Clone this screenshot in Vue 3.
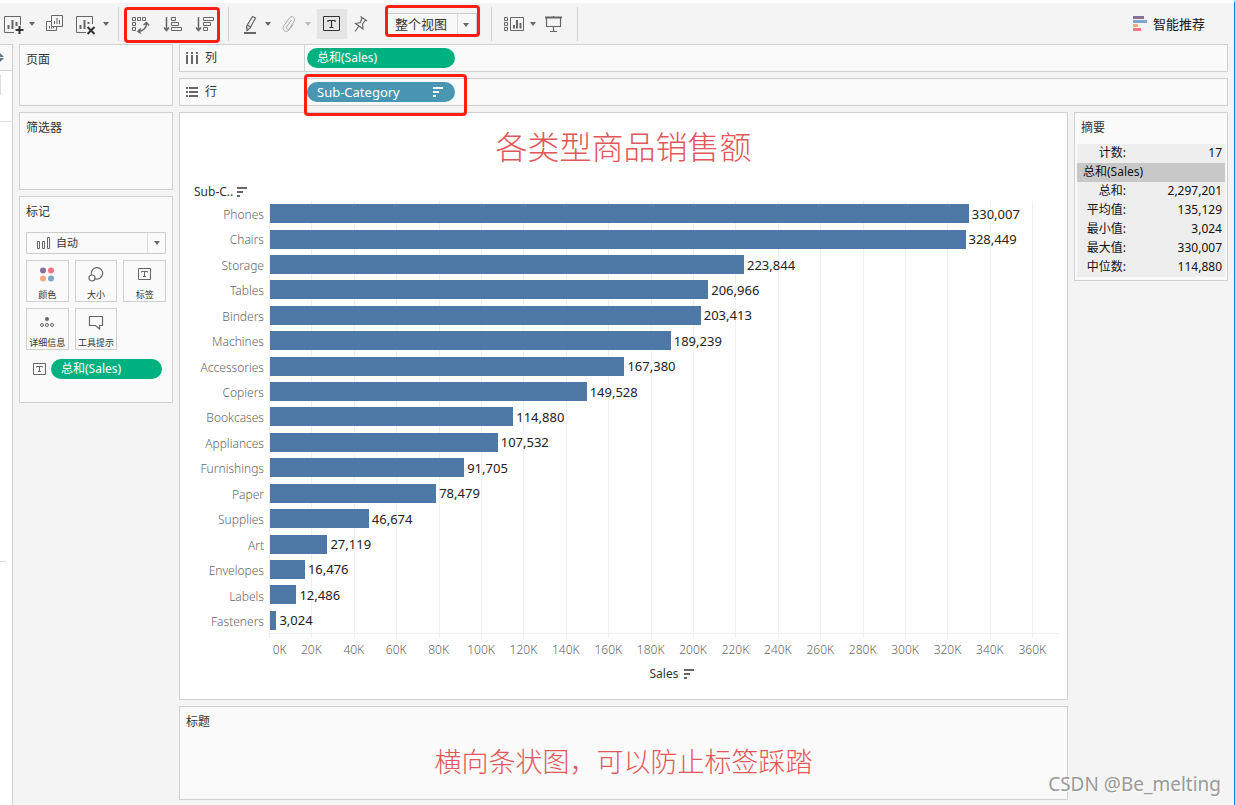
<script setup>
const AXIS_MAX = 372600

const rows = [
  ['Phones', 330007],
  ['Chairs', 328449],
  ['Storage', 223844],
  ['Tables', 206966],
  ['Binders', 203413],
  ['Machines', 189239],
  ['Accessories', 167380],
  ['Copiers', 149528],
  ['Bookcases', 114880],
  ['Appliances', 107532],
  ['Furnishings', 91705],
  ['Paper', 78479],
  ['Supplies', 46674],
  ['Art', 27119],
  ['Envelopes', 16476],
  ['Labels', 12486],
  ['Fasteners', 3024],
].map(([name, value]) => ({
  name,
  label: value.toLocaleString('en-US'),
  width: (value / AXIS_MAX) * 100 + '%',
}))

const ticks = Array.from({ length: 19 }, (_, i) => i * 20 + 'K')

const summary = [
  ['总和:', '2,297,201'],
  ['平均值:', '135,129'],
  ['最小值:', '3,024'],
  ['最大值:', '330,007'],
  ['中位数:', '114,880'],
]
</script>

<template>
  <div class="app">
    <header class="toolbar">
      <div class="group first">
        <span class="split">
          <button class="tool" aria-label="新建工作表">
            <svg width="24" height="24" viewBox="0 0 24 24" fill="none">
              <path d="M13 20.500H3.500V4.500H19.500V13" stroke="#666" />
              <path d="M7.500 17V13M11.500 17V8M15.500 14V10" stroke="#666" stroke-width="2" />
              <path d="M18.500 14V22M14.500 18H22.500" stroke="#333" stroke-width="2" />
            </svg>
          </button>
          <button class="caret" aria-label="新建选项"></button>
        </span>
        <button class="tool" aria-label="复制工作表">
          <svg width="24" height="24" viewBox="0 0 24 24" fill="none" stroke="#666">
            <path d="M8.500 3.500H19.500V14.500H8.500ZM8.500 9.500H3.500V18.500H13.500V14.500" />
            <path d="M11.500 12V9M14 12V6M16.500 12V8M6.500 16.500V14M8.500 16.500V15M10.500 16.500V15" />
          </svg>
        </button>
        <span class="split">
          <button class="tool wide" aria-label="清除工作表">
            <svg width="28" height="24" viewBox="0 0 28 24" fill="none">
              <path d="M15 20.500H5.500V4.500H21.500V12" stroke="#666" />
              <path d="M9.500 17V13M13.500 17V8M17.500 12V10" stroke="#666" stroke-width="2" />
              <path d="M16.500 15L23.500 22M23.500 15L16.500 22" stroke="#333" stroke-width="2" />
            </svg>
          </button>
          <button class="caret" aria-label="清除选项"></button>
        </span>
      </div>

      <div class="group sorts marked">
        <button class="tool" aria-label="交换行和列">
          <svg width="24" height="24" viewBox="0 0 24 24" fill="none" stroke="#666">
            <path d="M3.500 5.500h3v3h-3zM8.500 5.500h3v3h-3zM13.500 5.500h3v3h-3zM3.500 10.500h3v3h-3zM3.500 15.500h3v3h-3z" />
            <path d="M17.500 11.500C17.500 16 14 19 10 19.500M14.500 13L17.500 10.500L20 13.500M12 16.500L9 19.500L12 21.500" stroke-width="1.500" />
          </svg>
        </button>
        <button class="tool" aria-label="升序排序">
          <svg width="24" height="24" viewBox="0 0 24 24" fill="none" stroke="#666">
            <path d="M5.500 5V18M3 15.500L5.500 18.500L8 15.500" stroke-width="1.500" />
            <path d="M10.500 5.500h4v3h-4zM10.500 10.500h7v3h-7zM10.500 15.500h10v3h-10z" />
          </svg>
        </button>
        <button class="tool" aria-label="降序排序">
          <svg width="24" height="24" viewBox="0 0 24 24" fill="none" stroke="#666">
            <path d="M5.500 5V18M3 15.500L5.500 18.500L8 15.500" stroke-width="1.500" />
            <path d="M10.500 5.500h10v3h-10zM10.500 10.500h7v3h-7zM10.500 15.500h4v3h-4z" />
          </svg>
        </button>
      </div>

      <div class="group view-tools">
        <span class="split">
          <button class="tool" aria-label="突出显示">
            <svg width="24" height="24" viewBox="0 0 24 24" fill="none" stroke="#666">
              <path d="M15.500 4.500L18.500 6L13 16L10 18.500L9.500 14.500ZM10.500 13L13.500 15M10 18.500V15" stroke-width="1.200" />
              <path d="M7 21H19" stroke-width="2" />
            </svg>
          </button>
          <button class="caret" aria-label="突出显示选项"></button>
        </span>
        <span class="split">
          <button class="tool" disabled aria-label="组成员">
            <svg width="24" height="24" viewBox="0 0 24 24" fill="none" stroke="#aaa">
              <path d="M14.500 8L9.500 15C8.500 17 11 18.500 12.500 16.500L17 9.500C19 6 15 2.500 12.500 6L7 13.500C4 18 9 21.500 12 18L16 12.500" />
            </svg>
          </button>
          <button class="caret" disabled aria-label="组选项"></button>
        </span>
        <button class="tool active" aria-label="显示标记标签">
          <svg width="24" height="24" viewBox="0 0 24 24" fill="none" stroke="#333">
            <path d="M3.500 4.500H19.500V18.500H3.500Z" />
            <path d="M8 10V8.500H15V10M11.500 8.500V15.500M9.500 15.500H13.500" stroke-width="1.200" />
          </svg>
        </button>
        <button class="tool" aria-label="固定轴">
          <svg width="24" height="24" viewBox="0 0 24 24" fill="none" stroke="#666" stroke-width="1.200">
            <path d="M11.500 4.500L18 9M13 5.500L11.500 10.500L6.500 11.500L14 17L13.500 12L16.500 8M10 14L6 19.500" />
          </svg>
        </button>
        <span class="fit marked">
          <select aria-label="适合方式">
            <option>整个视图</option>
          </select>
        </span>
      </div>

      <div class="group show">
        <span class="split">
          <button class="tool" aria-label="显示隐藏卡">
            <svg width="24" height="24" viewBox="0 0 24 24" fill="none" stroke="#666">
              <path d="M2.500 5.500h3v3h-3zM2.500 10.500h3v3h-3zM2.500 15.500h3v3h-3zM8.500 5.500h13v13h-13z" />
              <path d="M12 16.500V13M15 16.500V8M18.500 16.500V11" stroke-width="2" />
            </svg>
          </button>
          <button class="caret" aria-label="卡选项"></button>
        </span>
        <button class="tool" aria-label="演示模式">
          <svg width="24" height="24" viewBox="0 0 24 24" fill="none" stroke="#666">
            <path d="M3 5.500H20" stroke-width="2" />
            <path d="M4.500 6V14.500H18.500V6M11.500 4V5M11.500 15V19.500M8 19.500H15" stroke-width="1.200" />
          </svg>
        </button>
      </div>

      <button class="show-me">
        <svg width="14" height="15" viewBox="0 0 14 15">
          <path fill="#88719b" d="M0 0h11v3H0z" />
          <path fill="#82a6ca" d="M0 4h14v3H0z" />
          <path fill="#f5a97c" d="M0 8h5v3H0z" />
          <path fill="#fb7384" d="M0 12h8v3H0z" />
        </svg>
        智能推荐
      </button>
    </header>

    <div class="workspace">
      <div class="data-edge">
        <div class="edge-head">
          <svg width="4" height="9" viewBox="0 0 4 9"><path fill="#667382" d="M0 0L4 4H0ZM0 5H4L0 9Z" /></svg>
        </div>
        <div class="edge-search"><i></i></div>
        <div class="edge-fields"></div>
        <div class="edge-params"></div>
      </div>

      <aside class="side">
        <section class="card pages"><h2>页面</h2></section>
        <section class="card filters"><h2>筛选器</h2></section>
        <section class="card marks">
          <h2>标记</h2>
          <div class="mark-type">
            <svg width="14" height="12" viewBox="0 0 14 12" fill="none" stroke="#666">
              <path d="M1.500 4.500h2v7h-2zM6.500 4.500h2v7h-2zM11.500 0.500h2v11h-2z" />
            </svg>
            <select aria-label="标记类型">
              <option>自动</option>
            </select>
          </div>
          <div class="mark-grid">
            <button>
              <svg width="24" height="20" viewBox="0 0 24 20">
                <circle cx="8" cy="5.500" r="3" fill="#88719b" /><circle cx="16" cy="5.500" r="3" fill="#fb7384" />
                <circle cx="8" cy="13.500" r="3" fill="#f5a97c" /><circle cx="16" cy="13.500" r="3" fill="#82a6ca" />
              </svg>
              颜色
            </button>
            <button>
              <svg width="24" height="20" viewBox="0 0 24 20" fill="none" stroke="#666" stroke-width="1.200">
                <path d="M7.500 10A5.700 5.700 0 1 1 10.500 13.500" /><circle cx="8" cy="13" r="3" />
              </svg>
              大小
            </button>
            <button>
              <svg width="24" height="20" viewBox="0 0 24 20" fill="none" stroke="#666">
                <path d="M5.500 3.500h12v11h-12zM8.500 7.500v-1h6v1M11.500 6.500v5M10 11.500h3" />
              </svg>
              标签
            </button>
            <button>
              <svg width="24" height="20" viewBox="0 0 24 20" fill="none" stroke="#666">
                <circle cx="12" cy="6" r="2" fill="#666" stroke="none" />
                <circle cx="7" cy="12" r="1.500" /><circle cx="12" cy="12" r="1.500" /><circle cx="17" cy="12" r="1.500" />
              </svg>
              详细信息
            </button>
            <button>
              <svg width="24" height="20" viewBox="0 0 24 20" fill="none" stroke="#666" stroke-width="1.200">
                <path d="M5.500 3.500h13v9h-3v3.500l-4-3.500h-6z" />
              </svg>
              工具提示
            </button>
          </div>
          <div class="mark-field">
            <svg width="13" height="12" viewBox="0 0 13 12" fill="none" stroke="#666">
              <path d="M0.500 0.500h12v11h-12zM3.500 4.500v-1h6v1M6.500 3.500v5M5 8.500h3" />
            </svg>
            <button class="pill green">总和(Sales)</button>
          </div>
        </section>
      </aside>

      <main class="main">
        <div class="shelf">
          <div class="shelf-name">
            <svg width="12" height="12" viewBox="0 0 12 12" fill="#666">
              <path d="M0 0h2v2H0zM5 0h2v2H5zM10 0h2v2h-2zM0 3h2v9H0zM5 3h2v9H5zM10 3h2v9h-2z" />
            </svg>
            列
          </div>
          <div class="shelf-slot"><button class="pill green">总和(Sales)</button></div>
        </div>
        <div class="shelf">
          <div class="shelf-name">
            <svg width="12" height="12" viewBox="0 0 12 12" fill="#666">
              <path d="M0 1h2v2H0zM3 1h9v2H3zM0 5h2v2H0zM3 5h9v2H3zM0 9h2v2H0zM3 9h9v2H3z" />
            </svg>
            行
          </div>
          <div class="shelf-slot marked">
            <button class="pill blue">
              Sub-Category
              <svg width="10" height="10" viewBox="0 0 10 10" fill="#fff"><path d="M0 0h10v2H0zM0 4h6v2H0zM0 8h3v2H0z" /></svg>
            </button>
          </div>
        </div>

        <div class="content">
          <div class="center">
            <section class="view">
              <h1>各类型商品销售额</h1>
              <div class="plot">
                <div class="field-head">
                  Sub-C..
                  <svg width="10" height="10" viewBox="0 0 10 10" fill="#666"><path d="M0 0h10v2H0zM0 4h6v2H0zM0 8h3v2H0z" /></svg>
                </div>
                <div class="chart">
                  <div class="names">
                    <span v-for="r in rows" :key="r.name">{{ r.name }}</span>
                  </div>
                  <div class="lines"><i v-for="t in ticks" :key="t"></i></div>
                  <div class="bars">
                    <div v-for="r in rows" :key="r.name" class="bar-row">
                      <span class="bar" :style="{ width: r.width }"></span>
                      <span class="value">{{ r.label }}</span>
                    </div>
                  </div>
                </div>
                <div class="axis"><span v-for="t in ticks" :key="t">{{ t }}</span></div>
                <div class="axis-title">
                  Sales
                  <svg width="10" height="10" viewBox="0 0 10 10" fill="#666"><path d="M0 0h10v2H0zM0 4h6v2H0zM0 8h3v2H0z" /></svg>
                </div>
              </div>
            </section>
            <section class="card caption">
              <h2>标题</h2>
              <p>横向条状图，可以防止标签踩踏</p>
            </section>
          </div>

          <aside class="card summary">
            <h2>摘要</h2>
            <table>
              <tbody>
                <tr><th scope="row">计数:</th><td>17</td></tr>
                <tr class="band"><th colspan="2" scope="colgroup">总和(Sales)</th></tr>
                <tr v-for="s in summary" :key="s[0]"><th scope="row">{{ s[0] }}</th><td>{{ s[1] }}</td></tr>
              </tbody>
            </table>
          </aside>
        </div>
      </main>
    </div>
    <div class="watermark">CSDN @Be_melting</div>
  </div>
</template>

<style>
body {
  margin: 0;
}
</style>

<style scoped>
* {
  box-sizing: border-box;
}
.app {
  position: relative;
  display: flex;
  flex-direction: column;
  min-height: 100vh;
  background: #f4f4f4;
  border-top: 3px solid #fff;
  border-right: 1px solid #1283da;
  color: #333;
  font: 12px/18px "Noto Sans", "Noto Sans CJK SC", sans-serif;
}
button,
select {
  margin: 0;
  padding: 0;
  border: 0;
  background: none;
  color: inherit;
  font: inherit;
  appearance: none;
}
svg {
  display: block;
  flex: none;
}
h1,
h2,
p {
  margin: 0;
  font-weight: 400;
}
h2 {
  font-size: 12px;
  line-height: 20px;
}

/* toolbar */
.toolbar {
  display: flex;
  align-items: center;
  height: 41px;
}
.group {
  position: relative;
  display: flex;
  align-items: center;
  height: 34px;
  border-right: 1px solid #d0d0d0;
}
.first {
  gap: 4px;
  padding: 0 5px 0 1px;
}
.sorts {
  gap: 8px;
  padding: 0 11px 0 10px;
}
.view-tools {
  gap: 2px;
  padding: 0 14px 0 8px;
}
.show {
  gap: 2px;
  padding: 0 11px 0 10px;
}
.split {
  display: flex;
}
.tool {
  width: 24px;
  height: 30px;
  display: grid;
  place-items: center;
}
.tool.wide {
  width: 28px;
}
.tool.active {
  width: 30px;
  background: #e5e5e5;
}
.caret {
  width: 14px;
  display: grid;
  place-items: center;
}
.caret::before,
.fit::before,
.mark-type::before {
  content: "";
  border: 3px solid transparent;
  border-top: 4px solid #666;
  border-bottom: 0;
}
.caret:disabled::before {
  border-top-color: #bbb;
}
.marked::after {
  content: "";
  position: absolute;
  border: 3px solid #ff1f12;
  border-radius: 4px;
  pointer-events: none;
}
.sorts::after {
  inset: 0 8px -2px 5px;
}
.fit {
  position: relative;
  margin-left: 12px;
}
.fit::before {
  position: absolute;
  right: 8px;
  top: 10px;
}
.fit::after {
  inset: -8px -3px -2px -2px;
}
.fit select {
  display: block;
  width: 90px;
  height: 22px;
  padding-left: 7px;
  border: 1px solid #ccc;
  background: linear-gradient(#ddd, #ddd) right 18px top / 1px 100% no-repeat #f8f8f8;
  font-size: 13px;
}
.show-me {
  display: flex;
  align-items: center;
  gap: 6px;
  margin-left: auto;
  padding-right: 29px;
  color: #111;
  font-size: 13px;
}

/* workspace */
.workspace {
  flex: 1;
  display: flex;
  gap: 6px;
  padding-right: 6px;
}
.data-edge {
  width: 13px;
  display: flex;
  flex-direction: column;
  border: solid #d0d0d0;
  border-width: 1px 1px 0 0;
  background: #fff;
}
.edge-head {
  height: 26px;
  padding-top: 8px;
  border-bottom: 1px solid #d0d0d0;
  background: #f9f9f9;
}
.edge-search {
  height: 51px;
  padding-top: 4px;
  border-bottom: 1px solid #e2e2e2;
}
.edge-search i {
  display: block;
  width: 1px;
  height: 20px;
  background: #ddd;
}
.edge-fields {
  height: 440px;
  width: 6px;
  border-bottom: 1px solid #ddd;
}
.edge-params {
  flex: 1;
}
.side {
  width: 154px;
  display: flex;
  flex-direction: column;
  gap: 6px;
}
.card {
  padding: 5px 6px;
  border: 1px solid #d0d0d0;
  background: #fafafa;
}
.pages {
  min-height: 62px;
}
.filters {
  min-height: 78px;
}
.marks {
  min-height: 207px;
}
.mark-type {
  position: relative;
  margin: 10px 0 6px;
}
.mark-type svg {
  position: absolute;
  left: 10px;
  top: 5px;
}
.mark-type::before {
  position: absolute;
  right: 6px;
  top: 9px;
}
.mark-type select {
  display: block;
  width: 100%;
  height: 22px;
  padding-left: 29px;
  border: 1px solid #ccc;
  border-radius: 1px;
  background: linear-gradient(#ddd, #ddd) right 17px top / 1px 100% no-repeat #fafafa;
  font-size: 11px;
}
.mark-grid {
  display: grid;
  grid-template-columns: repeat(3, 1fr);
  gap: 6px;
}
.mark-grid button {
  height: 42px;
  display: flex;
  flex-direction: column;
  align-items: center;
  padding-top: 4px;
  border: 1px solid #d0d0d0;
  font-size: 9px;
  line-height: 20px;
  white-space: nowrap;
}
.mark-field {
  display: flex;
  align-items: center;
  gap: 5px;
  padding: 9px 4px 0 7px;
}
.mark-field .pill {
  flex: 1;
}
.pill {
  display: flex;
  align-items: center;
  justify-content: space-between;
  height: 20px;
  padding: 0 12px 0 10px;
  border-radius: 10px;
  color: #fff;
}
.green {
  background: #00b180;
}
.blue {
  background: #4996b2;
}

/* shelves */
.main {
  flex: 1;
  min-width: 0;
  display: flex;
  flex-direction: column;
  gap: 6px;
  padding-bottom: 5px;
}
.shelf {
  display: flex;
  height: 28px;
  border: 1px solid #d0d0d0;
  background: #fafafa;
}
.shelf-name {
  display: flex;
  align-items: center;
  gap: 7px;
  width: 125px;
  padding-left: 6px;
  border-right: 1px solid #d0d0d0;
}
.shelf-slot {
  position: relative;
  padding: 3px 2px;
}
.shelf-slot .pill {
  width: 148px;
}
.shelf-slot .blue {
  font-size: 13px;
}
.shelf-slot::after {
  inset: -5px -10px -11px -1px;
  z-index: 1;
}

/* view */
.content {
  flex: 1;
  display: grid;
  grid-template-columns: 1fr 154px;
  gap: 6px;
  align-items: start;
}
.center {
  align-self: stretch;
  display: flex;
  flex-direction: column;
  gap: 6px;
}
.view {
  flex: 1;
  display: flex;
  flex-direction: column;
  padding: 10px 0 16px;
  border: 1px solid #d0d0d0;
  background: #fff;
}
h1 {
  margin-bottom: 12px;
  color: #e15759;
  font-size: 32px;
  line-height: 48px;
  font-weight: 300;
  text-align: center;
}
.plot {
  flex: 1;
  display: flex;
  flex-direction: column;
  padding: 0 8px 0 14px;
}
.field-head {
  display: flex;
  align-items: center;
  gap: 4px;
}
.chart {
  flex: 1;
  display: grid;
  grid-template-columns: 75px 1fr;
  grid-template-rows: 1fr;
}
.names,
.bars {
  display: grid;
  grid-template-rows: repeat(17, 1fr);
  align-items: center;
}
.names {
  padding-right: 5px;
  color: #666;
  font-weight: 300;
  line-height: 20px;
  text-align: right;
}
.names span {
  padding-top: 2px;
}
.lines,
.bars {
  grid-area: 1 / 2;
}
.lines {
  display: grid;
  grid-template-columns: repeat(18, 20fr) 12.6fr;
  margin-bottom: -4px;
}
.lines i {
  border-left: 1px solid #f0f0f0;
}
.bars {
  position: relative;
  padding-left: 1px;
  border-bottom: 1px solid #f0f0f0;
}
.bar-row {
  display: flex;
  align-items: center;
  gap: 3px;
}
.bar {
  flex: none;
  height: 19px;
  background: #4e79a7;
}
.value {
  color: #222;
  font-size: 13px;
}
.axis {
  display: grid;
  grid-template-columns: 10fr repeat(18, 20fr) 2.6fr;
  margin: 7px 0 6px 75px;
  color: #666;
  font-weight: 300;
  text-align: center;
}
.axis-title {
  display: flex;
  align-items: center;
  justify-content: center;
  gap: 6px;
  padding-left: 91px;
}
.caption {
  height: 94px;
}
.caption p {
  margin-top: 10px;
  color: #e15759;
  font-size: 27px;
  line-height: 40px;
  font-weight: 300;
  text-align: center;
}

/* summary */
.summary {
  padding: 5px 2px 3px;
}
.summary h2 {
  padding: 0 4px;
}
.summary table {
  width: 100%;
  margin-top: 6px;
  border-collapse: collapse;
  background: #eee;
  color: #111;
}
.summary tr {
  height: 19px;
}
.summary th,
.summary td {
  padding: 0 3px 1px 0;
  font-weight: 400;
  text-align: right;
}
.summary th {
  width: 52px;
}
.summary .band {
  background: #c8c8c8;
}
.summary .band th {
  padding-left: 6px;
  text-align: left;
}
.watermark {
  position: absolute;
  right: 13px;
  bottom: 6px;
  color: #999;
  font-size: 19px;
  line-height: 30px;
  text-shadow: 1px 1px #fff;
}
</style>
